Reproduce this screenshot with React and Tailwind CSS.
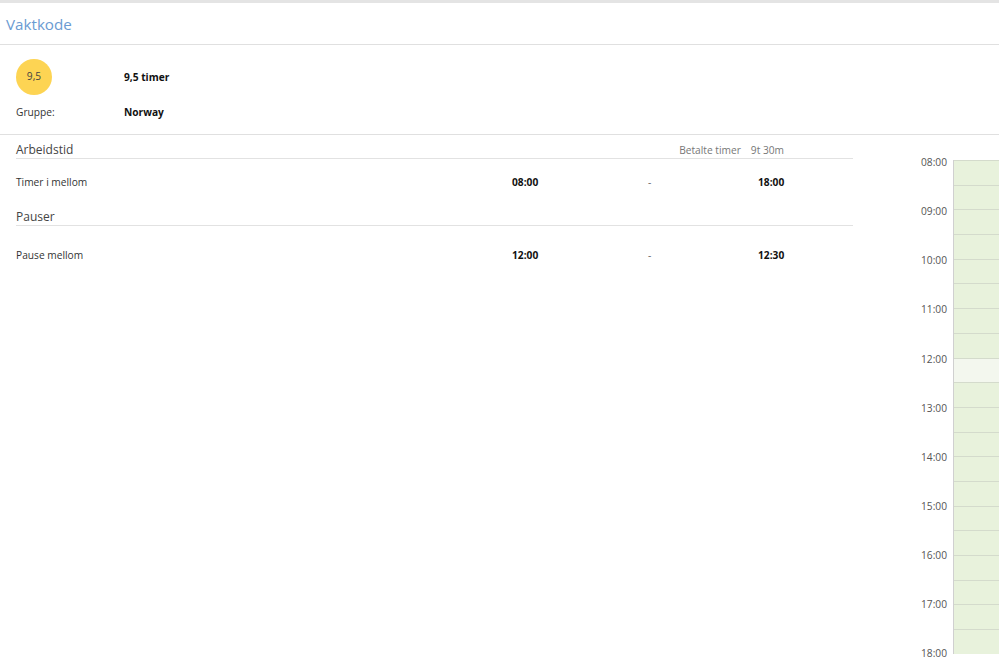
import React from "react";

const hours = ["08:00", "09:00", "10:00", "11:00", "12:00", "13:00", "14:00", "15:00", "16:00", "17:00", "18:00"];

// half hour slots from 08:00 to 18:00
const slots = Array.from({ length: 20 }, (_, i) => i);
const breakSlot = 8; // 12:00 - 12:30

function SectionHeading({ title, right }) {
  return (
    <div className="flex items-end justify-between border-b border-[#e2e2e2] pt-[6px] leading-[17px]">
      <span className="text-[12px] text-[#444]">{title}</span>
      {right}
    </div>
  );
}

function TimeRow({ label, from, to, className }) {
  return (
    <div className={"grid grid-cols-[496px_136px_110px_auto] leading-[16px] text-[10.2px] text-[#333] " + className}>
      <span>{label}</span>
      <span className="font-bold text-[#111]">{from}</span>
      <span className="text-[#666]">-</span>
      <span className="font-bold text-[#111]">{to}</span>
    </div>
  );
}

function Timeline() {
  return (
    <div className="flex flex-1">
      <div className="w-[94px] pt-[20px] text-right">
        {hours.map((h) => (
          <div key={h} className="h-[49.15px] text-[10.2px] leading-[14px] text-[#555]">
            {h}
          </div>
        ))}
      </div>
      <div className="ml-[6px] mt-[25px] flex-1 self-start border-l border-[#d0d0d0]">
        {slots.map((s) => (
          <div
            key={s}
            className={
              "h-[24.7px] border-t border-[#d4dbcc] " +
              (s === breakSlot ? "bg-[#f3f7ee]" : "bg-[#e8f2dc]")
            }
          />
        ))}
      </div>
    </div>
  );
}

export default function App() {
  return (
    <main className="h-[667px] w-[999px] overflow-hidden bg-white" style={{ fontFamily: '"Open Sans", "Noto Sans", sans-serif' }}>
      <div className="h-[3px] bg-[#e4e4e4]" />
      {/* Header */}
      <header className="flex h-[42px] items-center border-b border-[#e0e0e0] px-[6px] pt-[2px]">
        <h1 className="text-[15.2px] text-[#6b9bd2]">Vaktkode</h1>
      </header>

      {/* Summary */}
      <section className="border-b border-[#e0e0e0] px-4 pt-[14px] pb-[14px]">
        <div className="flex items-center">
          <div className="flex h-9 w-9 items-center justify-center rounded-full bg-[#fdd453] text-[10.2px] text-[#444]">
            9,5
          </div>
          <span className="ml-[72px] mt-[2px] text-[10.2px] font-bold text-[#111]">9,5 timer</span>
        </div>
        <div className="mt-[9px] flex items-center leading-[16px]">
          <span className="w-[108px] text-[10.2px] text-[#333]">Gruppe:</span>
          <span className="text-[10.2px] font-bold text-[#111]">Norway</span>
        </div>
      </section>

      <div className="flex">
        <div className="ml-4 w-[837px]">
          <SectionHeading
            title="Arbeidstid"
            right={
              <span className="mr-[69px] flex gap-[10px] text-[10.2px] leading-[16px] text-[#777]">
                <span>Betalte timer</span>
                <span>9t 30m</span>
              </span>
            }
          />
          <TimeRow label="Timer i mellom" from="08:00" to="18:00" className="h-[43px] pt-[15px]" />
          <SectionHeading title="Pauser" />
          <TimeRow label="Pause mellom" from="12:00" to="12:30" className="pt-[21px]" />
        </div>
        <Timeline />
      </div>
    </main>
  );
}
